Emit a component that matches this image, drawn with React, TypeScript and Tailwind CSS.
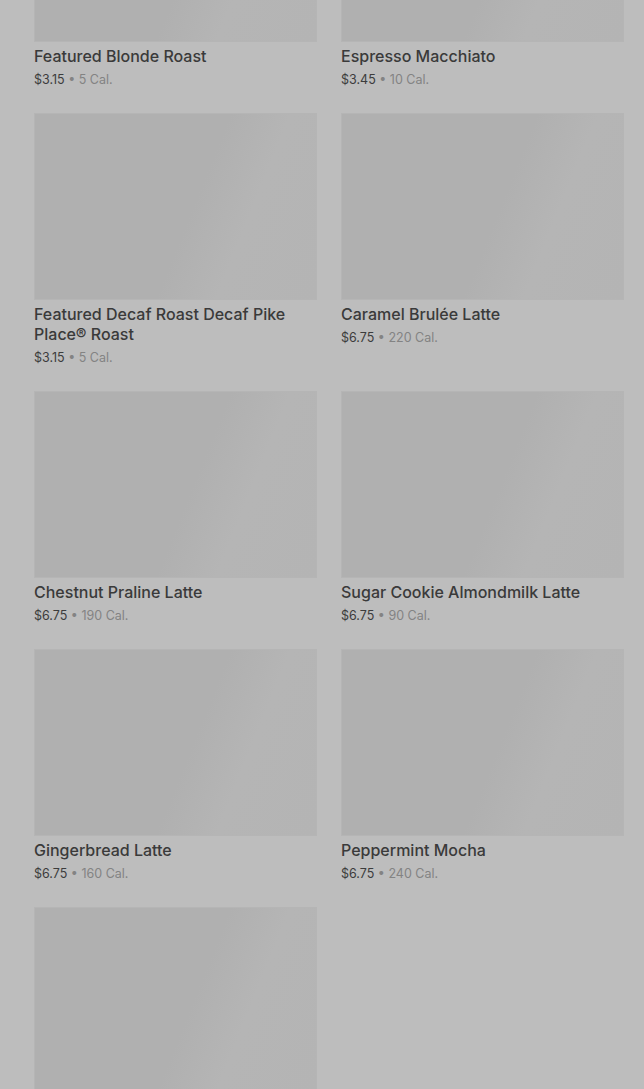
import React from 'react';

type Item = { name: string; price: string; cal: string };

const items: Item[] = [
  { name: 'Featured Blonde Roast', price: '$3.15', cal: '5 Cal.' },
  { name: 'Espresso Macchiato', price: '$3.45', cal: '10 Cal.' },
  { name: 'Featured Decaf Roast Decaf Pike Place® Roast', price: '$3.15', cal: '5 Cal.' },
  { name: 'Caramel Brulée Latte', price: '$6.75', cal: '220 Cal.' },
  { name: 'Chestnut Praline Latte', price: '$6.75', cal: '190 Cal.' },
  { name: 'Sugar Cookie Almondmilk Latte', price: '$6.75', cal: '90 Cal.' },
  { name: 'Gingerbread Latte', price: '$6.75', cal: '160 Cal.' },
  { name: 'Peppermint Mocha', price: '$6.75', cal: '240 Cal.' },
  { name: 'Irish Cream Cold Brew', price: '$5.45', cal: '140 Cal.' },
];

const ProductCard = ({ item }: { item: Item }) => (
  <div className="flex flex-col">
    <div className="h-[187px] w-full border border-[#b5b5b5] bg-[linear-gradient(112deg,#b0b0b0_0%,#b0b0b0_55%,#b5b5b5_72%,#b4b4b4_100%)]" />
    <h3 className="mt-[4px] text-[16px] leading-[20px] font-medium text-[#3a3a3a]">{item.name}</h3>
    <p className="mt-[5px] text-[12.5px] leading-[18px]">
      <span className="text-[#3c3c3c]">{item.price}</span>
      <span className="text-[#838383]"> • {item.cal}</span>
    </p>
  </div>
);

export default function App() {
  return (
    <div
      className="min-h-screen w-full bg-[#bdbdbd] pb-10"
      style={{ fontFamily: 'Inter, "Noto Sans", sans-serif' }}
    >
      <div className="-mt-[145px] grid grid-cols-2 gap-x-[24px] gap-y-[24px] pl-[34px] pr-[20px]">
        {items.map((item) => (
          <ProductCard key={item.name} item={item} />
        ))}
      </div>
    </div>
  );
}
